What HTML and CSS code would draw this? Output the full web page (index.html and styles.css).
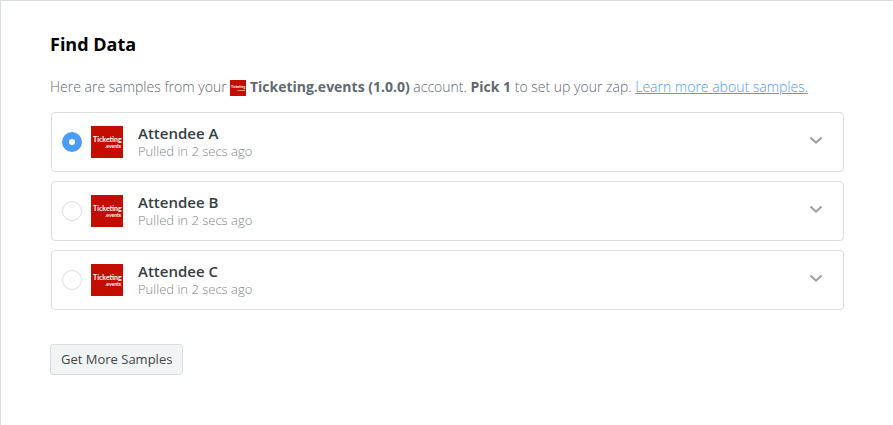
FILE: index.html
```html
<!DOCTYPE html>
<html lang="en">
<head>
    <meta charset="UTF-8">
    <meta name="viewport" content="width=device-width, initial-scale=1.0">
    <title>Find Data</title>
    <link rel="stylesheet" href="styles.css">
</head>
<body>
    <main class="panel">
        <h1 class="title">Find Data</h1>
        <p class="intro">Here are samples from your
            <svg class="logo-small" viewBox="0 0 32 32" aria-hidden="true">
                <rect width="32" height="32" fill="#c30d00"/>
                <text class="logo-name" x="2" y="16" font-size="7">Ticketing</text>
                <text class="logo-name" x="30" y="22" font-size="5" text-anchor="end">.events</text>
            </svg>
            <strong>Ticketing.events (1.0.0)</strong> account. <strong>Pick 1</strong> to set up your zap. <a class="learn" href="#">Learn more about samples.</a></p>

        <div class="samples">
            <div class="sample">
                <input class="radio" type="radio" name="sample" id="sampleA" checked>
                <label class="sample-label" for="sampleA">
                    <svg class="logo" viewBox="0 0 32 32" aria-hidden="true">
                        <rect width="32" height="32" fill="#c30d00"/>
                        <text class="logo-name" x="2" y="16" font-size="7">Ticketing</text>
                        <text class="logo-name" x="30" y="22" font-size="5" text-anchor="end">.events</text>
                    </svg>
                    <span class="sample-text">
                        <span class="sample-name">Attendee A</span>
                        <span class="sample-time">Pulled in 2 secs ago</span>
                    </span>
                </label>
                <button class="toggle" type="button" aria-label="Show Attendee A">
                    <svg class="chevron" viewBox="0 0 14 14"><path d="M1.5 4.5 7 9.7 12.5 4.5"/></svg>
                </button>
            </div>
            <div class="sample">
                <input class="radio" type="radio" name="sample" id="sampleB">
                <label class="sample-label" for="sampleB">
                    <svg class="logo" viewBox="0 0 32 32" aria-hidden="true">
                        <rect width="32" height="32" fill="#c30d00"/>
                        <text class="logo-name" x="2" y="16" font-size="7">Ticketing</text>
                        <text class="logo-name" x="30" y="22" font-size="5" text-anchor="end">.events</text>
                    </svg>
                    <span class="sample-text">
                        <span class="sample-name">Attendee B</span>
                        <span class="sample-time">Pulled in 2 secs ago</span>
                    </span>
                </label>
                <button class="toggle" type="button" aria-label="Show Attendee B">
                    <svg class="chevron" viewBox="0 0 14 14"><path d="M1.5 4.5 7 9.7 12.5 4.5"/></svg>
                </button>
            </div>
            <div class="sample">
                <input class="radio" type="radio" name="sample" id="sampleC">
                <label class="sample-label" for="sampleC">
                    <svg class="logo" viewBox="0 0 32 32" aria-hidden="true">
                        <rect width="32" height="32" fill="#c30d00"/>
                        <text class="logo-name" x="2" y="16" font-size="7">Ticketing</text>
                        <text class="logo-name" x="30" y="22" font-size="5" text-anchor="end">.events</text>
                    </svg>
                    <span class="sample-text">
                        <span class="sample-name">Attendee C</span>
                        <span class="sample-time">Pulled in 2 secs ago</span>
                    </span>
                </label>
                <button class="toggle" type="button" aria-label="Show Attendee C">
                    <svg class="chevron" viewBox="0 0 14 14"><path d="M1.5 4.5 7 9.7 12.5 4.5"/></svg>
                </button>
            </div>
        </div>

        <button class="more" type="button">Get More Samples</button>
    </main>
</body>
</html>
```

FILE: styles.css
```css
* {
    box-sizing: border-box;
}

body {
    margin: 0;
    background: #fff;
    font-family: 'Open Sans', sans-serif;
}

.panel {
    min-height: 100vh;
    padding: 31px 48px 48px 49px;
    border-top: 1px solid #d9dfe1;
    border-left: 1px solid #d9dfe1;
}

.title {
    margin: 0 0 19px;
    font-size: 18px;
    line-height: 24px;
    font-weight: 700;
    color: #000;
}

.intro {
    margin: 0 0 13px;
    font-size: 14px;
    line-height: 24px;
    font-weight: 300;
    color: #5f696f;
}

.intro strong {
    font-weight: 700;
}

.learn {
    color: #499df3;
}

.logo-small {
    width: 16px;
    height: 16px;
    vertical-align: middle;
}

.logo {
    width: 32px;
    height: 32px;
}

.logo-name {
    font-family: Lato, sans-serif;
    font-weight: 700;
    fill: #fff;
}

.samples {
    display: flex;
    flex-direction: column;
    gap: 9px;
    padding: 0 1px;
}

.sample {
    display: flex;
    align-items: center;
    gap: 9px;
    height: 60px;
    padding: 0 20px 0 10px;
    border: 1px solid #d9dfe1;
    border-radius: 4px;
}

.radio {
    appearance: none;
    width: 20px;
    height: 20px;
    margin: 0;
    border: 1px solid #d9dfe1;
    border-radius: 50%;
    background: #fff;
}

.radio:checked {
    border: 7px solid #499df3;
}

.sample-label {
    display: flex;
    flex: 1;
    align-items: center;
    gap: 15px;
}

.sample-text {
    display: flex;
    flex-direction: column;
    line-height: 18px;
}

.sample-name {
    font-size: 15px;
    font-weight: 600;
    color: #354044;
}

.sample-time {
    font-size: 13px;
    font-weight: 300;
    color: #7f888b;
}

.toggle {
    display: flex;
    padding: 0 0 4px;
    border: none;
    background: none;
    cursor: pointer;
}

.chevron {
    width: 14px;
    height: 14px;
    fill: none;
    stroke: #999fa3;
    stroke-width: 2;
}

.more {
    margin-top: 34px;
    padding: 5px 10px;
    border: 1px solid #d9dfe1;
    border-radius: 3px;
    background: #f0f4f5;
    font-family: inherit;
    font-size: 13px;
    line-height: 19px;
    color: #444;
    cursor: pointer;
}
```
